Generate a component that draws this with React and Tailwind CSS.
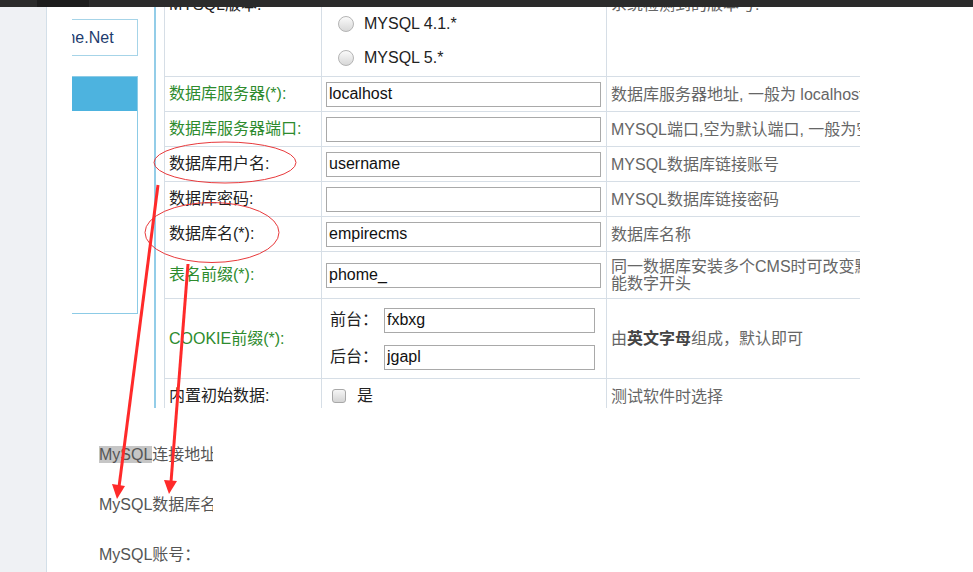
import React from 'react'

const font = { fontFamily: '"Liberation Sans", "Noto Sans CJK SC", sans-serif' }

function Radio({ label }) {
    return (
        <div className='h-[34px] flex items-center'>
            <span className='ml-[16px] w-[16px] h-[16px] rounded-full border border-[#b4b4b4] bg-gradient-to-b from-[#fafafa] to-[#d8d8d8]'></span>
            <span className='ml-[10px] text-[16px] text-[#222]'>{label}</span>
        </div>
    )
}

function Field({ value }) {
    return (
        <input
            readOnly
            value={value}
            className='h-[25px] w-[275px] border border-[#a9a9a9] px-[2px] text-[16px] text-[#111] bg-white outline-none'
        />
    )
}

function Row({ label, green, h, children, note }) {
    return (
        <div className={`flex border-b border-[#d6dee6] ${h}`}>
            <div className={`w-[157px] shrink-0 border-r border-[#d6dee6] flex items-center pl-[4px] text-[16px] ${green ? 'text-[#2e8b2e]' : 'text-[#222]'}`}>
                {label}
            </div>
            <div className='w-[285px] shrink-0 border-r border-[#d6dee6] flex items-center pl-[4px]'>
                {children}
            </div>
            <div className='w-[420px] shrink-0 flex items-center pl-[4px] text-[16px] text-[#666] leading-[17px] whitespace-nowrap'>
                {note}
            </div>
        </div>
    )
}

const rows = [
    { label: '数据库服务器(*):', green: true, value: 'localhost', note: '数据库服务器地址, 一般为 localhost' },
    { label: '数据库服务器端口:', green: true, value: '', note: 'MYSQL端口,空为默认端口, 一般为空' },
    { label: '数据库用户名:', value: 'username', note: 'MYSQL数据库链接账号' },
    { label: '数据库密码:', value: '', note: 'MYSQL数据库链接密码' },
    { label: '数据库名(*):', value: 'empirecms', note: '数据库名称' },
]

function Annotations() {
    return (
        <svg className='absolute inset-0 pointer-events-none' width='973' height='572'>
            <ellipse cx='225' cy='162.5' rx='71' ry='20.5' fill='none' stroke='#e8393b' strokeWidth='1' />
            <ellipse cx='212' cy='232.5' rx='67' ry='30' fill='none' stroke='#e8393b' strokeWidth='1' />
            <line x1='158' y1='185' x2='119' y2='487' stroke='#ff2a2a' strokeWidth='3' />
            <polygon points='112,484 125,486 117,499' fill='#ff2a2a' />
            <line x1='188' y1='264' x2='171' y2='482' stroke='#ff2a2a' strokeWidth='3' />
            <polygon points='164,480 177,481 169,494' fill='#ff2a2a' />
        </svg>
    )
}

export default function App() {
    return (
        <div className='relative w-[973px] h-[572px] overflow-hidden bg-white' style={font}>
            <div className='h-[7px] bg-[#2b2b2b] flex'>
                <div className='ml-[37px] w-[52px] bg-[#1d1d1d]'></div>
            </div>

            <div className='flex h-[565px]'>
                <div className='w-[47px] shrink-0 bg-[#eff1f4] border-r border-[#d3dfe8]'></div>

                <div className='flex-1 flex flex-col'>
                    <div className='flex h-[401px] overflow-hidden'>
                        {/* sidebar, scrolled off to the left */}
                        <div className='ml-[25px] w-[66px] shrink-0'>
                            <div className='mt-[12px] h-[37px] border-t border-b border-r border-[#a6d4e8] overflow-hidden flex items-center'>
                                <span className='-ml-[10px] text-[16px] text-[#1e3c6e] whitespace-nowrap'>me.Net</span>
                            </div>
                            <div className='mt-[20px] h-[238px] border-t border-r border-b border-[#8ccbe6]'>
                                <div className='h-[34px] bg-[#4db3df]'></div>
                            </div>
                        </div>

                        <div className='ml-[16px] w-[2px] shrink-0 bg-[#93cde8]'></div>

                        {/* form table */}
                        <div className='ml-[8px] w-[696px] shrink-0 overflow-hidden border-l border-[#d6dee6]'>
                            <div className='-mt-[20px]'>
                                <div className='flex h-[90px] border-b border-[#d6dee6]'>
                                    <div className='w-[157px] shrink-0 border-r border-[#d6dee6] pl-[4px] pt-[8px] text-[16px] leading-[20px] text-[#222]'>
                                        MYSQL版本:
                                    </div>
                                    <div className='w-[285px] shrink-0 border-r border-[#d6dee6] pt-[20px]'>
                                        <Radio label='MYSQL 4.1.*' />
                                        <Radio label='MYSQL 5.*' />
                                    </div>
                                    <div className='w-[420px] shrink-0 pl-[4px] pt-[8px] text-[16px] leading-[20px] text-[#666]'>
                                        系统检测到的版本号:
                                    </div>
                                </div>

                                {rows.map((r, key) => (
                                    <Row key={key} label={r.label} green={r.green} h='h-[35px]' note={r.note}>
                                        <Field value={r.value} />
                                    </Row>
                                ))}

                                <Row
                                    label='表名前缀(*):'
                                    green
                                    h='h-[47px]'
                                    note={<span>同一数据库安装多个CMS时可改变默认，不<br />能数字开头</span>}
                                >
                                    <Field value='phome_' />
                                </Row>

                                <Row label='COOKIE前缀(*):' green h='h-[80px]' note={<span>由<b className='font-semibold text-[#444]'>英文字母</b>组成，默认即可</span>}>
                                    <div className='flex flex-col gap-[12px] pl-[4px] text-[16px] text-[#222]'>
                                        <div className='flex items-center'>
                                            <span className='w-[54px]'>前台：</span>
                                            <input readOnly value='fxbxg' className='h-[25px] w-[211px] border border-[#a9a9a9] px-[2px] text-[16px] text-[#111] outline-none' />
                                        </div>
                                        <div className='flex items-center'>
                                            <span className='w-[54px]'>后台：</span>
                                            <input readOnly value='jgapl' className='h-[25px] w-[211px] border border-[#a9a9a9] px-[2px] text-[16px] text-[#111] outline-none' />
                                        </div>
                                    </div>
                                </Row>

                                <Row label='内置初始数据:' h='h-[35px]' note='测试软件时选择'>
                                    <div className='flex items-center pl-[6px]'>
                                        <span className='w-[14px] h-[14px] rounded-[3px] border border-[#a8a8a8] bg-gradient-to-b from-[#f6f6f6] to-[#d4d4d4]'></span>
                                        <span className='ml-[11px] text-[16px] text-[#222]'>是</span>
                                    </div>
                                </Row>
                            </div>
                        </div>
                    </div>

                    {/* article text below */}
                    <div className='ml-[52px] w-[114px] overflow-hidden whitespace-nowrap pt-[37px] text-[16px] leading-[20px] text-[#555]'>
                        <p className='h-[20px] mb-[30px]'><span className='bg-[#c6c6c6]'>MySQL</span>连接地址</p>
                        <p className='h-[20px] mb-[30px]'>MySQL数据库名</p>
                        <p className='h-[20px]'>MySQL账号：</p>
                    </div>
                </div>
            </div>

            <Annotations />
        </div>
    )
}
